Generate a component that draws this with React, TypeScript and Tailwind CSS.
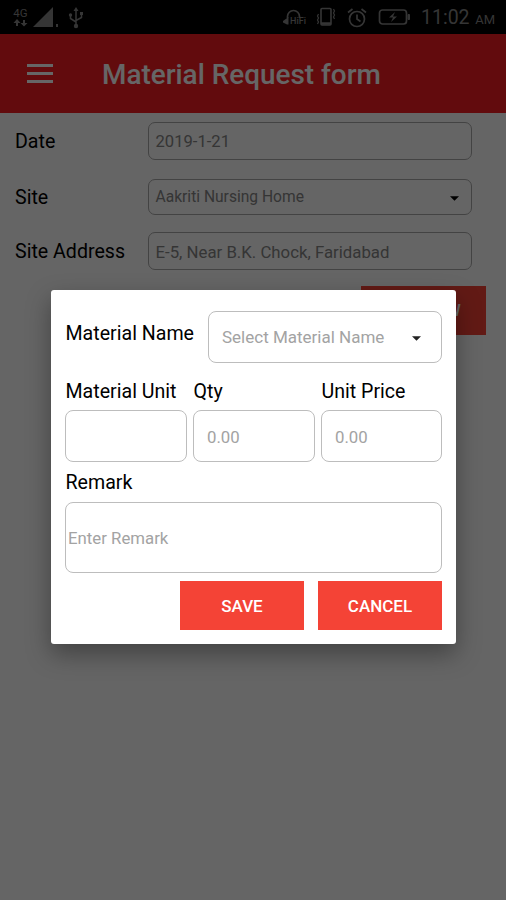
import React, { useState } from "react";

interface FieldProps {
  label: string;
  className: string;
  children: React.ReactNode;
}

const Caret = ({ className = "" }: { className?: string }) => (
  <svg viewBox="0 0 10 5" className={`h-[5px] w-[9px] shrink-0 ${className}`}>
    <path d="M0 0h10L5 5z" fill="currentColor" />
  </svg>
);

const StatusBar = () => (
  <div className="flex h-[34px] items-center bg-black pl-[13px] pr-[11px] text-[#858585]">
    <div className="flex w-[15px] flex-col items-center">
      <span className="text-[11.5px] leading-[10px]">4G</span>
      <svg width="15" height="8" viewBox="0 0 15 8" className="mt-px" fill="currentColor">
        <path d="M4 0l3.500 4H5v3H3V4H.500zM11 7.500 7.500 4H10V1h2v3h2.500z" />
      </svg>
    </div>
    <svg width="27" height="21" viewBox="0 0 27 21" className="ml-1" fill="currentColor">
      <path d="M1 20 21 0v20z" />
      <path d="M24 17h2v3h-2z" />
    </svg>
    <svg width="16" height="22" viewBox="0 0 16 22" className="ml-[9px] mt-px" fill="none" stroke="currentColor" strokeWidth="1.5">
      <path d="M8 3v15M2.500 8v3.500L8 15M13.500 7v3.500L8 13.500" />
      <path d="M8 0l2.500 4h-5zM12 5h3v3h-3z" fill="currentColor" stroke="none" />
      <circle cx="2.500" cy="8" r="1.700" fill="currentColor" stroke="none" />
      <circle cx="8" cy="19" r="2.200" fill="currentColor" stroke="none" />
    </svg>
    <div className="ml-auto flex items-center">
      <div className="relative h-5 w-6">
        <svg width="24" height="20" viewBox="0 0 24 20" fill="none" stroke="currentColor">
          <path d="M4.500 11V9.500a6 6 0 0 1 12 0V11" strokeWidth="1.700" />
          <path d="M5.500 10v7.500H4L0 15.500V14z" fill="currentColor" stroke="none" />
        </svg>
        <span className="absolute left-[7px] top-[10px] text-[9px] leading-[9px] font-medium">HiFi</span>
      </div>
      <svg width="20" height="20" viewBox="0 0 20 20" className="ml-[9px]" fill="none" stroke="currentColor">
        <rect x="5" y="1.500" width="10" height="16.500" rx="1" strokeWidth="1.600" />
        <path d="M5 16.500h10" strokeWidth="2.500" />
        <path d="M2.500 7l-1 2 1 2-1 2 1 2-1 2M17.500 2l1 2-1 2 1 2-1 2 1 2" strokeWidth="1.200" />
      </svg>
      <svg width="20" height="20" viewBox="0 0 20 20" className="ml-[11px] mt-px" fill="none" stroke="currentColor" strokeWidth="1.700">
        <circle cx="10" cy="11" r="7.500" />
        <path d="M10 6.500V11l3.500 2.500M1 4.500 5.500 1M19 4.500 14.500 1" />
      </svg>
      <svg width="33" height="18" viewBox="0 0 33 18" className="ml-[11px]" fill="none" stroke="currentColor">
        <rect x="1.500" y="2" width="27" height="14" rx="3" strokeWidth="1.700" />
        <path d="M30 6.500h1.500v5H30z" strokeWidth="1" fill="currentColor" />
        <path d="M17 4l-6 5.500h4L13 14l6-5.500h-4z" fill="currentColor" stroke="none" />
      </svg>
      <div className="ml-[10px] flex w-[74px] items-baseline justify-between whitespace-nowrap pt-[4px]">
        <span className="text-[19.5px] leading-6">11:02</span>
        <span className="text-[13px] leading-6">AM</span>
      </div>
    </div>
  </div>
);

const RequestRow = ({ label, className, children }: FieldProps) => (
  <div className="flex items-center">
    <span className="w-[133px] shrink-0 pt-[2px] text-[19.6px] leading-[30px] text-black">{label}</span>
    <div
      className={`flex w-[324px] items-center rounded-[7px] border border-[#a8a8a8] pl-[6.5px] pr-3 text-[#858585] ${className}`}
    >
      {children}
    </div>
  </div>
);

const DialogField = ({ label, className, children }: FieldProps) => (
  <div className={className}>
    <div className="whitespace-nowrap pl-[0.5px] pt-px text-[19.6px] leading-[30px]">{label}</div>
    {children}
  </div>
);

const inputClass =
  "block w-full rounded-lg border border-[#bdbdbd] bg-white text-[16.8px] text-black placeholder-[#a3a3a3] outline-none";

export default function App() {
  const [unit, setUnit] = useState("");
  const [qty, setQty] = useState("");
  const [price, setPrice] = useState("");
  const [remark, setRemark] = useState("");

  return (
    <div className="relative h-[900px] w-[506px] overflow-hidden bg-[#fcfcfc] font-[Roboto,sans-serif]">
      <StatusBar />
      <header className="flex h-[79px] items-center bg-[#f51c22] pl-[27px] text-white">
        <div className="flex w-[26px] flex-col gap-[5px]">
          <span className="h-[3px] bg-white" />
          <span className="h-[3px] bg-white" />
          <span className="h-[3px] bg-white" />
        </div>
        <h1 className="ml-[49px] pt-[2px] text-[27.9px] font-medium">Material Request form</h1>
      </header>

      <main className="pl-[15px] pt-[9px]">
        <RequestRow label="Date" className="h-[38px] pt-[3px] text-[16.6px]">
          2019-1-21
        </RequestRow>
        <div className="h-[19px]" />
        <RequestRow label="Site" className="h-[36px] justify-between pt-[2px] text-[15.6px]">
          Aakriti Nursing Home
          <Caret className="text-black" />
        </RequestRow>
        <div className="h-[17px]" />
        <RequestRow label="Site Address" className="h-[38px] pt-[3px] text-[16.8px]">
          E-5, Near B.K. Chock, Faridabad
        </RequestRow>
        <button className="ml-[346px] mt-[16px] block h-[49px] w-[125px] bg-[#f44336] text-[17px] font-medium text-white">
          ADD NEW
        </button>
      </main>

      <div className="absolute inset-0 bg-black/60">
        <div
          role="dialog"
          className="ml-[51px] mt-[290px] h-[354px] w-[405px] rounded-[3px] bg-white px-[14px] pt-[21px] text-black shadow-[0_10px_24px_rgba(0,0,0,0.35)]"
        >
          <div className="flex h-[52px] justify-between">
            <span className="whitespace-nowrap pl-[0.5px] pt-[8px] text-[19.6px] leading-[30px]">Material Name</span>
            <button className="flex w-[234px] items-center justify-between rounded-lg border border-[#bdbdbd] pl-[13px] pr-5 pt-[2px] text-[17px] text-[#a3a3a3]">
              Select Material Name
              <Caret className="text-[#222]" />
            </button>
          </div>

          <div className="mt-[13px] flex gap-[6px]">
            <DialogField label="Material Unit" className="w-[122px]">
              <input
                value={unit}
                onChange={(e) => setUnit(e.target.value)}
                className={`${inputClass} mt-[3px] h-[52px] px-[14px]`}
              />
            </DialogField>
            <DialogField label="Qty" className="w-[122px]">
              <input
                value={qty}
                onChange={(e) => setQty(e.target.value)}
                placeholder="0.00"
                className={`${inputClass} mt-[3px] h-[52px] px-[13px] pt-px`}
              />
            </DialogField>
            <DialogField label="Unit Price" className="w-[121px]">
              <input
                value={price}
                onChange={(e) => setPrice(e.target.value)}
                placeholder="0.00"
                className={`${inputClass} mt-[3px] h-[52px] px-[13px] pt-px`}
              />
            </DialogField>
          </div>

          <DialogField label="Remark" className="mt-[5px]">
            <input
              value={remark}
              onChange={(e) => setRemark(e.target.value)}
              placeholder="Enter Remark"
              className={`${inputClass} mt-[4px] h-[71px] px-[2px]`}
            />
          </DialogField>

          <div className="mt-[8px] flex justify-end gap-[14px] text-[17px] font-medium text-white">
            <button className="h-[49px] w-[124px] bg-[#f44336] pt-[2px]">SAVE</button>
            <button className="h-[49px] w-[124px] bg-[#f44336] pt-[2px]">CANCEL</button>
          </div>
        </div>
      </div>
    </div>
  );
}
